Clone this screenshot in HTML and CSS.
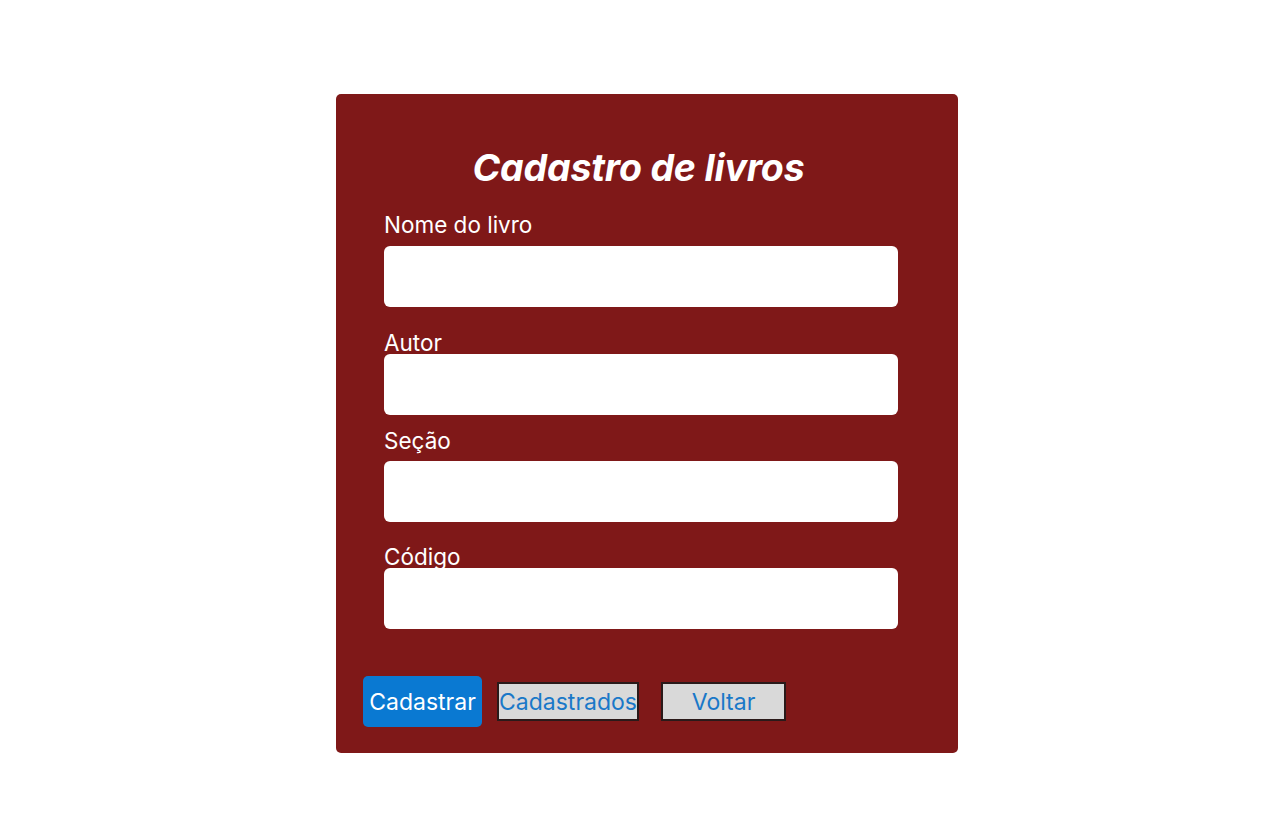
FILE: index.html
```html
<!DOCTYPE html>
<html lang="pt-BR">
<head>
<meta charset="utf-8">
<title>Cadastro de livros</title>
<link rel="stylesheet" href="styles.css">
</head>
<body>
<main class="card">
  <h1 class="title">Cadastro de livros</h1>
  <form class="form">
    <label class="label label-nome" for="nome">Nome do livro</label>
    <input class="field" id="nome" type="text">
    <label class="label label-autor" for="autor">Autor</label>
    <input class="field" id="autor" type="text">
    <label class="label label-secao" for="secao">Seção</label>
    <input class="field" id="secao" type="text">
    <label class="label label-codigo" for="codigo">Código</label>
    <input class="field" id="codigo" type="text">
  </form>
  <div class="actions">
    <button class="btn btn-primary" type="button">Cadastrar</button>
    <button class="btn btn-plain btn-list" type="button">Cadastrados</button>
    <button class="btn btn-plain btn-back" type="button">Voltar</button>
  </div>
</main>
</body>
</html>
```
FILE: styles.css
```css
html, body {
  margin: 0;
  padding: 0;
  background: #ffffff;
}

body {
  font-family: Inter, "Noto Sans", sans-serif;
  padding-top: 94px;
}

.card {
  box-sizing: border-box;
  width: 622px;
  height: 659px;
  margin-left: 336px;
  background: #7f1818;
  border-radius: 5px;
  padding: 50px 0 0 0;
  display: flex;
  flex-direction: column;
}

.title {
  margin: 0;
  text-align: center;
  color: #ffffff;
  font-size: 37.5px;
  font-weight: 700;
  font-style: italic;
  line-height: 48px;
  letter-spacing: -0.2px;
  padding-right: 17px;
}

.form {
  display: flex;
  flex-direction: column;
  padding: 0 60px 0 48px;
}

.label {
  color: #ffffff;
  font-size: 22.5px;
  line-height: 24px;
  padding-top: 1px;
}

.label-nome { margin-top: 20px; margin-bottom: 9px; }
.label-autor { margin-top: 23px; margin-bottom: -1px; }
.label-secao { margin-top: 13px; margin-bottom: 8px; }
.label-codigo { margin-top: 22px; margin-bottom: -1px; }

.field {
  box-sizing: border-box;
  width: 514px;
  height: 61px;
  border: none;
  border-radius: 6px;
  background: #ffffff;
  margin: 0;
}

.actions {
  display: flex;
  align-items: center;
  padding-left: 27px;
  margin-top: 47px;
}

.btn {
  font-family: Inter, "Noto Sans", sans-serif;
  font-size: 23px;
  margin: 0;
  box-sizing: border-box;
  cursor: pointer;
  white-space: nowrap;
  padding-top: 1px;
}

.btn-primary {
  width: 119px;
  height: 51px;
  background: #0a79d2;
  color: #ffffff;
  border: none;
  border-radius: 5px;
  padding-left: 0;
  padding-right: 0;
}

.btn-plain {
  height: 39px;
  background: #d9d9d9;
  color: #1a78c8;
  border: 2px solid #2a1a1a;
  border-radius: 0;
  padding-left: 0;
  padding-right: 0;
}

.btn-list {
  width: 142px;
  margin-left: 15px;
}

.btn-back {
  width: 125px;
  margin-left: 22px;
}
```
